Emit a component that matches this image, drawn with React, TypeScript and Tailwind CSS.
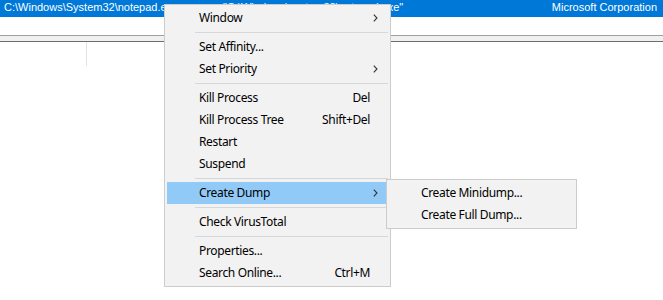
import { Fragment } from 'react'

type Item = { label: string; shortcut?: string; sub?: boolean; active?: boolean } | 'sep'

const MENU: Item[] = [
  { label: 'Window', sub: true },
  'sep',
  { label: 'Set Affinity...' },
  { label: 'Set Priority', sub: true },
  'sep',
  { label: 'Kill Process', shortcut: 'Del' },
  { label: 'Kill Process Tree', shortcut: 'Shift+Del' },
  { label: 'Restart' },
  { label: 'Suspend' },
  'sep',
  { label: 'Create Dump', sub: true, active: true },
  'sep',
  { label: 'Check VirusTotal' },
  'sep',
  { label: 'Properties...' },
  { label: 'Search Online...', shortcut: 'Ctrl+M' },
]

const SUBMENU: Item[] = [{ label: 'Create Minidump...' }, { label: 'Create Full Dump...' }]

function Chevron() {
  return (
    <svg width="5" height="8" viewBox="0 0 5 8" className="text-[#333]">
      <path d="M0.8 0.6 L4 4 L0.8 7.4" fill="none" stroke="currentColor" strokeWidth="1.1" />
    </svg>
  )
}

function MenuRows({ items }: { items: Item[] }) {
  return (
    <>
      {items.map((it, i) =>
        it === 'sep' ? (
          <div key={i} className="h-[7px] flex items-center pl-[30px] pr-[2px]">
            <div className="h-px w-full bg-[#d7d7d7]" />
          </div>
        ) : (
          <Fragment key={i}>
            <div
              className={`h-[22px] flex items-center pl-[32px] pr-[8px] ml-[2px] mr-[4px] ${
                it.active ? 'bg-[#91c9f7]' : ''
              }`}
            >
              <span className="flex-1">{it.label}</span>
              {it.shortcut && <span className="mr-[8px]">{it.shortcut}</span>}
              {it.sub && <Chevron />}
            </div>
          </Fragment>
        )
      )}
    </>
  )
}

export default function App() {
  return (
    <div className="relative w-[663px] h-[300px] overflow-hidden bg-white text-black font-['Noto_Sans',sans-serif]">
      {/* selected process row */}
      <div className="h-[17px] bg-[#0078d7] text-white text-[11px] leading-[15px] flex font-['Liberation_Sans',sans-serif] whitespace-nowrap">
        <div className="w-[223px] pl-[4px] overflow-hidden">C:\Windows\System32\notepad.exe</div>
        <div className="flex-1 overflow-hidden">"C:\Windows\system32\notepad.exe"</div>
        <div className="pr-[6px]">Microsoft Corporation</div>
      </div>
      <div className="h-[18px]" />
      {/* splitter */}
      <div className="h-[7px] border-t border-t-[#a0a0a0] border-b border-b-[#6d6d6d] bg-[#f0f0f0]" />
      <div className="flex">
        <div className="w-[87px] h-[24px] border-r border-r-[#e3e3e3]" />
      </div>

      {/* context menu */}
      <div className="absolute left-[164px] top-[4px] w-[227px] bg-[#f2f2f2] border border-[#cccccc] py-[2px] text-[12px] tracking-[-0.35px]">
        <MenuRows items={MENU} />
      </div>
      <div className="absolute left-[386px] top-[179px] w-[191px] bg-[#f2f2f2] border border-[#cccccc] py-[2px] text-[12px] tracking-[-0.35px]">
        <MenuRows items={SUBMENU} />
      </div>
    </div>
  )
}
